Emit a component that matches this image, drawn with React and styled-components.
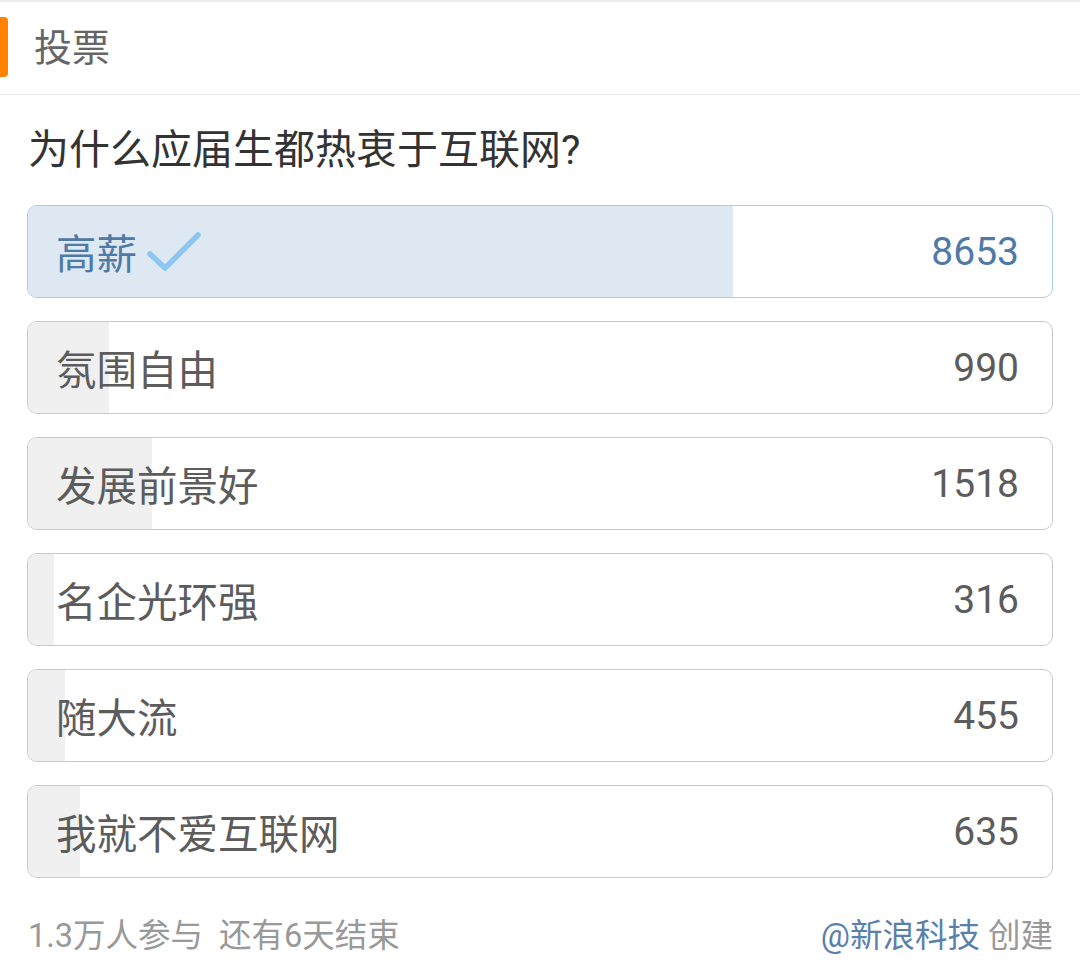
import React from "react";
import styled, { createGlobalStyle } from "styled-components";

const Global = createGlobalStyle`
  html, body { margin: 0; padding: 0; background: #ffffff; }
  body { font-family: Roboto, "Noto Sans CJK SC", sans-serif; }
`;

const Page = styled.div`
  width: 1080px;
  min-height: 979px;
  background: #fff;
  border-top: 2px solid #ececec;
  box-sizing: border-box;
`;

const Header = styled.div`
  position: relative;
  height: 92px;
  display: flex;
  align-items: center;
  padding-left: 34px;
  border-bottom: 1px solid #ececec;
`;

const Accent = styled.span`
  position: absolute;
  left: 0;
  top: 15px;
  width: 8px;
  height: 60px;
  background: #ff8200;
  border-radius: 0 4px 4px 0;
`;

const HeaderTitle = styled.h2`
  margin: 0;
  font-size: 38px;
  font-weight: 400;
  color: #666;
  line-height: 1;
`;

const Body = styled.div`
  padding: 0 27px;
`;

const Question = styled.div`
  padding: 30px 0 30px 1px;
  font-size: 41px;
  line-height: 50px;
  color: #333;
`;

const Options = styled.div`
  display: flex;
  flex-direction: column;
  gap: 23px;
`;

const Option = styled.div`
  position: relative;
  height: 93px;
  box-sizing: border-box;
  border: 1px solid ${(p) => (p.$selected ? "#a9cde5" : "#c9c9c9")};
  border-radius: 10px;
  overflow: hidden;
  display: flex;
  align-items: center;
  justify-content: space-between;
  padding: 0 33px 0 28px;
  color: ${(p) => (p.$selected ? "#4f7aa5" : "#5c5c5c")};
  font-size: 40.5px;
`;

const Fill = styled.div`
  position: absolute;
  left: 0;
  top: 0;
  bottom: 0;
  background: ${(p) => (p.$selected ? "#dde8f3" : "#f0f0f0")};
`;

const Label = styled.span`
  position: relative;
  display: flex;
  align-items: center;
  gap: 10px;
`;

const Count = styled.span`
  position: relative;
  font-size: 39px;
`;

const Footer = styled.div`
  display: flex;
  justify-content: space-between;
  padding: 40px 27px 0 28px;
  font-size: 32.5px;
  line-height: 36px;
  color: #999;
`;

const Meta = styled.span`
  & > span + span { margin-left: 16px; }
`;

const Author = styled.span`
  color: #5a80aa;
  margin-right: 8px;
`;

const Check = () => (
  <svg width="54" height="44" viewBox="0 0 54 44">
    <polyline
      points="3,24 18,38 51,5"
      fill="none"
      stroke="#8ec6f2"
      strokeWidth="5.5"
      strokeLinecap="round"
      strokeLinejoin="round"
    />
  </svg>
);

const options = [
  { label: "高薪", count: 8653, selected: true },
  { label: "氛围自由", count: 990 },
  { label: "发展前景好", count: 1518 },
  { label: "名企光环强", count: 316 },
  { label: "随大流", count: 455 },
  { label: "我就不爱互联网", count: 635 },
];

const total = options.reduce((s, o) => s + o.count, 0);

export default function App() {
  return (
    <Page>
      <Global />
      <Header>
        <Accent />
        <HeaderTitle>投票</HeaderTitle>
      </Header>
      <Body>
        <Question>为什么应届生都热衷于互联网?</Question>
        <Options>
          {options.map((o) => (
            <Option key={o.label} $selected={o.selected}>
              <Fill $selected={o.selected} style={{ width: `${(o.count / total) * 100}%` }} />
              <Label>
                {o.label}
                {o.selected && <Check />}
              </Label>
              <Count>{o.count}</Count>
            </Option>
          ))}
        </Options>
      </Body>
      <Footer>
        <Meta>
          <span>1.3万人参与</span>
          <span>还有6天结束</span>
        </Meta>
        <span>
          <Author>@新浪科技</Author>创建
        </span>
      </Footer>
    </Page>
  );
}
